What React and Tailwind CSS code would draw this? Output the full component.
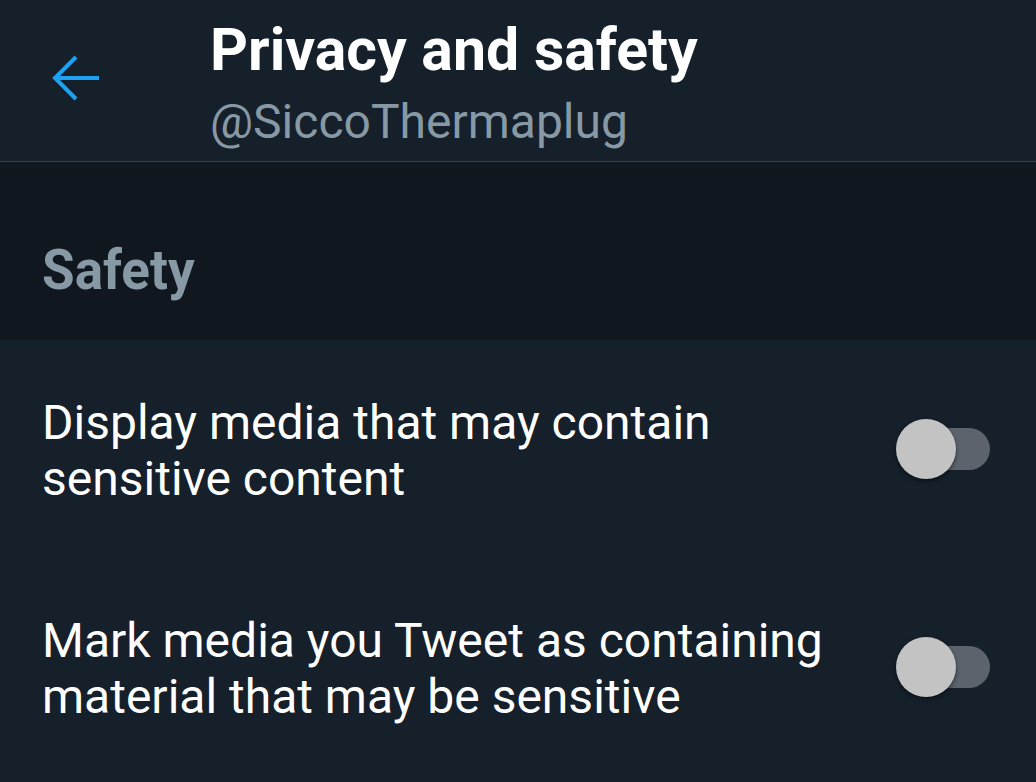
export default function App() {
  const rows = [
    ['Display media that may contain', 'sensitive content'],
    ['Mark media you Tweet as containing', 'material that may be sensitive'],
  ];

  return (
    <div
      className="flex h-[782px] w-[1036px] flex-col overflow-hidden bg-[#15202b]"
      style={{ fontFamily: 'Roboto, "Liberation Sans", sans-serif' }}
    >
      <div className="flex h-[162px] shrink-0 items-start border-b border-[#38444d] bg-[#15202b]">
        <div className="w-[210px] pl-[47px] pt-[48px]">
          <svg width="60" height="60" viewBox="0 0 60 60" fill="none">
            <path
              d="M8 30H52M29 9L8 30L29 51"
              stroke="#1da1f2"
              strokeWidth="4"
              strokeLinejoin="miter"
            />
          </svg>
        </div>
        <div className="flex flex-col pt-[15px]">
          <div className="text-[59px] font-bold leading-[70px] text-white">
            Privacy and safety
          </div>
          <div className="pt-[7px] text-[48px] leading-[60px] text-[#8899a6]">
            @SiccoThermaplug
          </div>
        </div>
      </div>

      <div className="flex h-[178px] shrink-0 items-center bg-[#10171e] pl-[42px]">
        <div className="origin-center scale-y-[1.06] pt-[36px] text-[53px] font-bold leading-[60px] text-[#8899a6]">
          Safety
        </div>
      </div>

      {rows.map((lines, i) => (
        <div
          key={i}
          className="flex h-[218px] shrink-0 items-center justify-between pl-[42px] pr-[46px]"
        >
          <div className="pt-[4px] text-[48px] leading-[56px] text-white">
            {lines[0]}
            <br />
            {lines[1]}
          </div>
          <div className="relative h-[42px] w-[84px]">
            <div className="absolute inset-0 rounded-full bg-[#5c636d]" />
            <div className="absolute left-[-10px] top-[-9px] h-[60px] w-[60px] rounded-full bg-[#c3c3c3] shadow-[0_2px_4px_rgba(0,0,0,0.5)]" />
          </div>
        </div>
      ))}
    </div>
  );
}
